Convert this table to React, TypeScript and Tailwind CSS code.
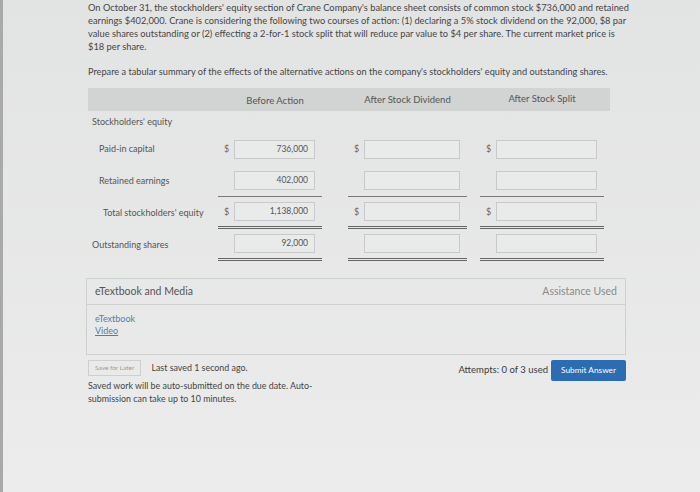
import React from 'react';

const font = { fontFamily: 'Lato, "Open Sans", sans-serif' };

function Cell({ dollar, value, line }: { dollar?: boolean; value?: string; line?: 'single' | 'double' }) {
  const border =
    line === 'single'
      ? 'border-b border-[#777]'
      : line === 'double'
      ? 'border-b-[3px] border-double border-[#666]'
      : '';
  return (
    <div className={`flex items-center h-full pl-[6px] pr-[7px] ${border}`}>
      <span className="w-[10px] text-[9px] text-[#666]">{dollar ? '$' : ''}</span>
      <div className="flex-1 h-[19px] border border-[#c9c9c9] bg-[#e9eaea] flex items-center justify-end pr-[6px] text-[8.5px] text-[#555]">
        {value}
      </div>
    </div>
  );
}

function Row({
  label,
  indent,
  cells,
}: {
  label: string;
  indent: string;
  cells: { dollar?: boolean; value?: string; line?: 'single' | 'double' }[];
}) {
  return (
    <div className="flex h-[32px]">
      <div className={`w-[130px] flex items-center text-[9px] text-[#555] ${indent}`}>{label}</div>
      <div className="w-[104px]">
        <Cell {...cells[0]} />
      </div>
      <div className="w-[26px]" />
      <div className="w-[119px]">
        <Cell {...cells[1]} />
      </div>
      <div className="w-[13px]" />
      <div className="w-[124px]">
        <Cell {...cells[2]} />
      </div>
    </div>
  );
}

export default function App() {
  return (
    <div
      className="w-[700px] h-[492px] overflow-hidden bg-gradient-to-b from-[#e2e3e3] to-[#ececec] border-l-[3px] border-[#a9a9a9]"
      style={font}
    >
      <div className="pl-[85px] pt-[1px] w-[660px]">
        {/* Problem text */}
        <p className="text-[9.3px] leading-[13px] text-[#454545] whitespace-nowrap">
          On October 31, the stockholders' equity section of Crane Company's balance sheet consists of common stock $736,000 and retained
          <br />
          earnings $402,000. Crane is considering the following two courses of action: (1) declaring a 5% stock dividend on the 92,000, $8 par
          <br />
          value shares outstanding or (2) effecting a 2-for-1 stock split that will reduce par value to $4 per share. The current market price is
          <br />
          $18 per share.
        </p>
        <p className="mt-[12px] text-[9.2px] leading-[13px] text-[#454545] whitespace-nowrap">
          Prepare a tabular summary of the effects of the alternative actions on the company's stockholders' equity and outstanding shares.
        </p>

        {/* Table */}
        <div className="mt-[10px] w-[522px]">
          <div className="flex h-[23px] bg-[#d2d3d3] text-[9.5px] text-[#555]">
            <div className="w-[130px]" />
            <div className="w-[104px] text-center pt-[6px] pl-[10px]">Before Action</div>
            <div className="w-[26px]" />
            <div className="w-[119px] text-center pt-[5px]">After Stock Dividend</div>
            <div className="w-[13px]" />
            <div className="w-[124px] text-center pt-[4px]">After Stock Split</div>
          </div>
          <div className="h-[22px] flex items-center pl-[4px] text-[9px] text-[#555]">Stockholders' equity</div>
          <Row
            label="Paid-in capital"
            indent="pl-[11px]"
            cells={[{ dollar: true, value: '736,000' }, { dollar: true }, { dollar: true }]}
          />
          <Row
            label="Retained earnings"
            indent="pl-[11px]"
            cells={[
              { value: '402,000', line: 'single' },
              { line: 'single' },
              { line: 'single' },
            ]}
          />
          <Row
            label="Total stockholders' equity"
            indent="pl-[15px]"
            cells={[
              { dollar: true, value: '1,138,000', line: 'double' },
              { dollar: true, line: 'double' },
              { dollar: true, line: 'double' },
            ]}
          />
          <Row
            label="Outstanding shares"
            indent="pl-[4px]"
            cells={[
              { value: '92,000', line: 'double' },
              { line: 'double' },
              { line: 'double' },
            ]}
          />
        </div>

        {/* eTextbook and Media */}
        <div className="mt-[17px] -ml-[2px] w-[540px] h-[77px] border border-[#cfd0d0]">
          <div className="h-[26px] flex items-center justify-between px-[8px] border-b border-[#cfd0d0]">
            <span className="text-[10.5px] text-[#555]">eTextbook and Media</span>
            <span className="text-[10.5px] text-[#8a8a8a]">Assistance Used</span>
          </div>
          <div className="pl-[8px] pt-[8px] text-[9px] leading-[12px] text-[#4d7fae]">
            <div>eTextbook</div>
            <div className="underline">Video</div>
          </div>
        </div>

        {/* Footer */}
        <div className="mt-[5px] w-[538px] flex justify-between">
          <div>
            <div className="flex items-center">
              <div className="h-[16px] px-[6px] border border-[#cfcfcf] flex items-center text-[6.5px] text-[#9a9a9a]">
                Save for Later
              </div>
              <span className="ml-[10px] text-[8.9px] text-[#444]">Last saved 1 second ago.</span>
            </div>
            <p className="mt-[3px] text-[8.9px] leading-[13px] text-[#444] whitespace-nowrap">
              Saved work will be auto-submitted on the due date. Auto-
              <br />
              submission can take up to 10 minutes.
            </p>
          </div>
          <div className="flex items-start">
            <span className="mt-[3px] mr-[3px] text-[9.5px] text-[#3a3a3a]">Attempts: 0 of 3 used</span>
            <div className="h-[21px] px-[10px] bg-[#2c6cb0] rounded-[2px] flex items-center text-[8.3px] text-white">
              Submit Answer
            </div>
          </div>
        </div>
      </div>
    </div>
  );
}
